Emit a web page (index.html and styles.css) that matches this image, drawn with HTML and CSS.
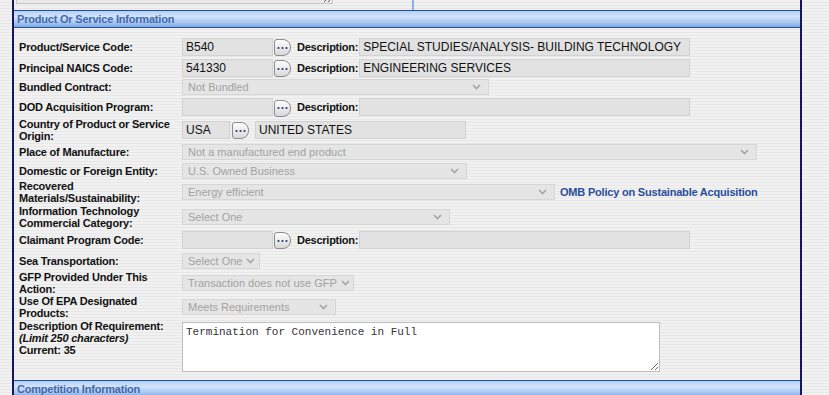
FILE: index.html
```html
<!DOCTYPE html>
<html lang="en">

<head>
  <meta charset="UTF-8" />
  <title>Product Or Service Information</title>
  <link rel="stylesheet" href="styles.css">
</head>

<body>
  <div class="panel">

    <!-- tail of the previous section -->
    <div class="prev-section">
      <div class="prev-left">
        <textarea class="prev-notes" disabled></textarea>
      </div>
      <div class="prev-right"></div>
    </div>

    <div class="section-head">Product Or Service Information</div>

    <div class="form-grid">
      <label class="lbl">Product/Service Code:</label>
      <div class="field">
        <input class="txt code" type="text" value="B540" readonly>
        <button class="lookup" type="button"><svg width="11" height="4" viewBox="0 0 11 4"><circle cx="1.5" cy="2" r="1.1"/><circle cx="5.5" cy="2" r="1.1"/><circle cx="9.5" cy="2" r="1.1"/></svg></button>
        <span class="desc-lbl">Description:</span>
        <input class="txt desc" type="text" value="SPECIAL STUDIES/ANALYSIS- BUILDING TECHNOLOGY" readonly>
      </div>

      <label class="lbl">Principal NAICS Code:</label>
      <div class="field">
        <input class="txt code" type="text" value="541330" readonly>
        <button class="lookup" type="button"><svg width="11" height="4" viewBox="0 0 11 4"><circle cx="1.5" cy="2" r="1.1"/><circle cx="5.5" cy="2" r="1.1"/><circle cx="9.5" cy="2" r="1.1"/></svg></button>
        <span class="desc-lbl">Description:</span>
        <input class="txt desc" type="text" value="ENGINEERING SERVICES" readonly>
      </div>

      <label class="lbl">Bundled Contract:</label>
      <div class="field">
        <span class="sel w-bundled">Not Bundled<svg class="chev" width="9" height="6" viewBox="0 0 9 6"><path d="M1 1l3.5 3.5L8 1"/></svg></span>
      </div>

      <label class="lbl">DOD Acquisition Program:</label>
      <div class="field">
        <input class="txt code" type="text" value="" readonly>
        <button class="lookup" type="button"><svg width="11" height="4" viewBox="0 0 11 4"><circle cx="1.5" cy="2" r="1.1"/><circle cx="5.5" cy="2" r="1.1"/><circle cx="9.5" cy="2" r="1.1"/></svg></button>
        <span class="desc-lbl">Description:</span>
        <input class="txt desc" type="text" value="" readonly>
      </div>

      <label class="lbl">Country of Product or Service Origin:</label>
      <div class="field">
        <input class="txt country" type="text" value="USA" readonly>
        <button class="lookup near" type="button"><svg width="11" height="4" viewBox="0 0 11 4"><circle cx="1.5" cy="2" r="1.1"/><circle cx="5.5" cy="2" r="1.1"/><circle cx="9.5" cy="2" r="1.1"/></svg></button>
        <input class="txt country-name" type="text" value="UNITED STATES" readonly>
      </div>

      <label class="lbl">Place of Manufacture:</label>
      <div class="field">
        <span class="sel w-place">Not a manufactured end product<svg class="chev" width="9" height="6" viewBox="0 0 9 6"><path d="M1 1l3.5 3.5L8 1"/></svg></span>
      </div>

      <label class="lbl">Domestic or Foreign Entity:</label>
      <div class="field">
        <span class="sel w-entity">U.S. Owned Business<svg class="chev" width="9" height="6" viewBox="0 0 9 6"><path d="M1 1l3.5 3.5L8 1"/></svg></span>
      </div>

      <label class="lbl">Recovered Materials/Sustainability:</label>
      <div class="field">
        <span class="sel w-recovered">Energy efficient<svg class="chev" width="9" height="6" viewBox="0 0 9 6"><path d="M1 1l3.5 3.5L8 1"/></svg></span>
        <a class="policy-link" href="#">OMB Policy on Sustainable Acquisition</a>
      </div>

      <label class="lbl">Information Technology Commercial Category:</label>
      <div class="field">
        <span class="sel w-it">Select One<svg class="chev" width="9" height="6" viewBox="0 0 9 6"><path d="M1 1l3.5 3.5L8 1"/></svg></span>
      </div>

      <label class="lbl">Claimant Program Code:</label>
      <div class="field">
        <input class="txt code" type="text" value="" readonly>
        <button class="lookup" type="button"><svg width="11" height="4" viewBox="0 0 11 4"><circle cx="1.5" cy="2" r="1.1"/><circle cx="5.5" cy="2" r="1.1"/><circle cx="9.5" cy="2" r="1.1"/></svg></button>
        <span class="desc-lbl">Description:</span>
        <input class="txt desc" type="text" value="" readonly>
      </div>

      <label class="lbl">Sea Transportation:</label>
      <div class="field">
        <span class="sel w-sea">Select One<svg class="chev" width="9" height="6" viewBox="0 0 9 6"><path d="M1 1l3.5 3.5L8 1"/></svg></span>
      </div>

      <label class="lbl">GFP Provided Under This Action:</label>
      <div class="field">
        <span class="sel w-gfp">Transaction does not use GFP<svg class="chev" width="9" height="6" viewBox="0 0 9 6"><path d="M1 1l3.5 3.5L8 1"/></svg></span>
      </div>

      <label class="lbl">Use Of EPA Designated Products:</label>
      <div class="field">
        <span class="sel w-epa">Meets Requirements<svg class="chev" width="9" height="6" viewBox="0 0 9 6"><path d="M1 1l3.5 3.5L8 1"/></svg></span>
      </div>

      <label class="lbl top">Description Of Requirement:<br><i>(Limit 250 characters)</i><br>Current: 35</label>
      <div class="field top">
        <textarea class="req-text">Termination for Convenience in Full</textarea>
      </div>
    </div>

    <div class="section-head">Competition Information</div>
  </div>
</body>

</html>
```

FILE: styles.css
```css
* {
  box-sizing: border-box;
}

html,
body {
  margin: 0;
  height: 100%;
  overflow: hidden;
  font-family: "Liberation Sans", Arial, sans-serif;
  font-size: 11px;
  background: repeating-linear-gradient(to bottom, #f1f1f1 0, #f1f1f1 2px, #e7e7e7 2px, #e7e7e7 3px);
}

.panel {
  margin-left: 12px;
  width: 790px;
  height: 100%;
  border-left: 2px solid #16165e;
  border-right: 2px solid #16165e;
}

/* previous section, only its bottom edge shows */
.prev-section {
  display: flex;
  height: 10px;
  overflow: hidden;
}

.prev-left {
  width: 398px;
  padding-left: 2px;
}

.prev-notes {
  display: block;
  width: 317px;
  height: 40px;
  margin-top: -36px;
  border: 1px solid #c4c4c4;
  background: #e9e9e9;
}

.prev-right {
  border-left: 2px solid #8fb1e2;
}

.section-head {
  height: 18px;
  padding-left: 3px;
  line-height: 16px;
  font-weight: bold;
  letter-spacing: -0.2px;
  color: #4269ab;
  border-top: 1px solid #1d4d9b;
  border-bottom: 1px solid #1d4d9b;
  background: linear-gradient(to bottom, #b6cff3 0%, #d3e4fa 35%, #aac8f1 70%, #80aae6 100%);
}

.form-grid {
  display: grid;
  grid-template-columns: 163px 1fr;
  grid-template-rows: 21px 21px 18px 22px 23px 21px 18px 24px 25px 21px 21px 23px 25px 58px;
  margin: 8px 0 3px;
  padding-left: 5px;
}

.lbl {
  align-self: center;
  font-weight: bold;
  letter-spacing: -0.2px;
  line-height: 12px;
  color: #111;
}

.lbl.top {
  align-self: start;
  padding-top: 1px;
}

.field {
  display: flex;
  align-items: center;
}

.field.top {
  align-items: flex-start;
  padding-top: 3px;
}

.txt {
  height: 18px;
  padding: 0 3px;
  border: 1px solid #d2d2d2;
  background: #e2e2e2;
  font-family: "Liberation Sans", Arial, sans-serif;
  font-size: 12px;
  color: #111;
  outline: none;
}

.code {
  width: 91px;
}

.desc {
  width: 331px;
}

.country {
  width: 48px;
}

.country-name {
  width: 211px;
  margin-left: 6px;
}

.lookup {
  display: flex;
  align-items: center;
  justify-content: center;
  width: 17px;
  height: 17px;
  margin: 2px 0 0 1px;
  padding: 0;
  border: 1px solid #8c8c8c;
  border-radius: 3px 8px 8px 3px;
  background: linear-gradient(to bottom, #fdfdfd, #d9d9d9);
}

.lookup.near {
  margin-left: 2px;
}

.lookup svg {
  fill: #27386c;
}

.desc-lbl {
  margin: 0 1px 0 6px;
  font-weight: bold;
  letter-spacing: -0.25px;
  color: #111;
}

.sel {
  display: flex;
  align-items: center;
  justify-content: space-between;
  height: 16px;
  padding: 0 7px 0 5px;
  border: 1px solid #d6d6d6;
  background: #e5e5e5;
  font-size: 11px;
  color: #a2a2a2;
  white-space: nowrap;
}

.chev {
  flex-shrink: 0;
  margin-left: 4px;
  fill: none;
  stroke: #a4a4a4;
  stroke-width: 1.6;
}

.w-bundled { width: 307px; }
.w-place { width: 575px; }
.w-entity { width: 285px; }
.w-recovered { width: 373px; }
.w-it { width: 268px; }
.w-sea { width: 78px; }
.w-gfp { width: 172px; }
.w-epa { width: 154px; }

.policy-link {
  margin-left: 5px;
  font-weight: bold;
  letter-spacing: -0.2px;
  color: #2b4d9b;
  text-decoration: none;
}

.req-text {
  display: block;
  width: 478px;
  height: 50px;
  padding: 3px 3px;
  border: 1px solid #bdbdbd;
  background: #fff;
  font-family: "Liberation Mono", "Courier New", monospace;
  font-size: 11px;
  color: #333;
}
```
